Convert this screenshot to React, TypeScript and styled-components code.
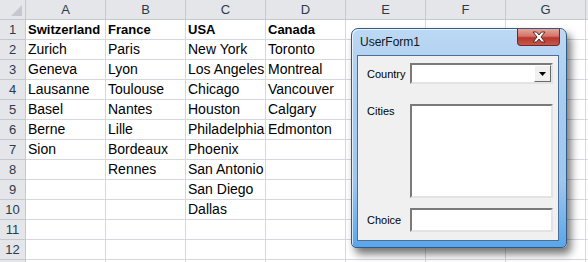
import styled, { createGlobalStyle } from 'styled-components';

const columns = ['A', 'B', 'C', 'D', 'E', 'F', 'G', ''];

const data = [
    ['Switzerland', 'France', 'USA', 'Canada'],
    ['Zurich', 'Paris', 'New York', 'Toronto'],
    ['Geneva', 'Lyon', 'Los Angeles', 'Montreal'],
    ['Lausanne', 'Toulouse', 'Chicago', 'Vancouver'],
    ['Basel', 'Nantes', 'Houston', 'Calgary'],
    ['Berne', 'Lille', 'Philadelphia', 'Edmonton'],
    ['Sion', 'Bordeaux', 'Phoenix', ''],
    ['', 'Rennes', 'San Antonio', ''],
    ['', '', 'San Diego', ''],
    ['', '', 'Dallas', ''],
    ['', '', '', ''],
    ['', '', '', ''],
];

export default function App() {
    return (
        <>
            <GlobalStyle />
            <Page>
                <Sheet>
                    <Corner />
                    {columns.map((col, i) => (
                        <ColHeader key={'h' + i}>{col}</ColHeader>
                    ))}
                    {data.map((row, r) => (
                        <Row key={r} index={r} row={row} />
                    ))}
                    <RowHeader />
                    {columns.map((_, c) => (
                        <Cell key={'last' + c} />
                    ))}
                </Sheet>
                <Window>
                    <TitleBar>
                        <Title>UserForm1</Title>
                        <CloseButton>
                            <svg width="16" height="12" viewBox="0 0 16 12">
                                <path
                                    d="M2 1 L5.5 1 L8 4 L10.5 1 L14 1 L10 6 L14 11 L10.5 11 L8 8 L5.5 11 L2 11 L6 6 Z"
                                    fill="#ffffff"
                                    stroke="#5a2a26"
                                    strokeWidth="1"
                                    strokeLinejoin="round"
                                />
                            </svg>
                        </CloseButton>
                    </TitleBar>
                    <Client>
                        <FormRow height={21}>
                            <Label>Country</Label>
                            <Combo>
                                <DropButton>
                                    <svg width="7" height="4" viewBox="0 0 7 4">
                                        <path d="M0 0 L7 0 L3.5 4 Z" fill="#000" />
                                    </svg>
                                </DropButton>
                            </Combo>
                        </FormRow>
                        <FormRow height={94} space={20} top>
                            <Label top>Cities</Label>
                            <Sunken />
                        </FormRow>
                        <FormRow height={24} space={10}>
                            <Label>Choice</Label>
                            <Sunken />
                        </FormRow>
                    </Client>
                </Window>
            </Page>
        </>
    );
}

function Row({ index, row }) {
    return (
        <>
            <RowHeader>{index + 1}</RowHeader>
            {columns.map((_, c) => (
                <Cell key={c} bold={index === 0}>{row[c] || ''}</Cell>
            ))}
        </>
    );
}

const GlobalStyle = createGlobalStyle`
    body {
        margin: 0;
        background: #ffffff;
        font-family: "Liberation Sans", Arial, sans-serif;
    }
`;

const Page = styled.div`
    position: relative;
    width: 588px;
    height: 262px;
    overflow: hidden;
`;

const Sheet = styled.div`
    display: grid;
    grid-template-columns: 26px repeat(7, 80px) 40px;
    grid-auto-rows: 20px;
`;

const Corner = styled.div`
    position: relative;
    background: #e4e6ea;
    border-right: 1px solid #c5c9cf;
    border-bottom: 1px solid #c5c9cf;
    &::after {
        content: '';
        position: absolute;
        right: 3px;
        bottom: 3px;
        border-left: 11px solid transparent;
        border-bottom: 11px solid #c4c7cc;
    }
`;

const ColHeader = styled.div`
    display: flex;
    align-items: center;
    justify-content: center;
    background: #e4e6ea;
    border-right: 1px solid #c5c9cf;
    border-bottom: 1px solid #c5c9cf;
    font-size: 13px;
    color: #2b3a4c;
`;

const RowHeader = styled.div`
    display: flex;
    align-items: center;
    justify-content: center;
    background: #e4e6ea;
    border-right: 1px solid #c5c9cf;
    border-bottom: 1px solid #c5c9cf;
    font-size: 13px;
    color: #2b3a4c;
`;

const Cell = styled.div<{ bold?: boolean }>`
    display: flex;
    align-items: flex-end;
    padding: 0 0 2px 2px;
    border-right: 1px solid #d5d8dd;
    border-bottom: 1px solid #d5d8dd;
    font-size: ${p => (p.bold ? '13px' : '14px')};
    font-weight: ${p => (p.bold ? 700 : 400)};
    color: #000;
    white-space: nowrap;
`;

const Window = styled.div`
    position: absolute;
    left: 351px;
    top: 28px;
    width: 216px;
    height: 220px;
    box-sizing: border-box;
    display: flex;
    flex-direction: column;
    padding: 0 7px 6px 5px;
    border: 1px solid #34597f;
    border-radius: 7px 7px 5px 5px;
    background: linear-gradient(180deg, #bcd8f4 0%, #a9cdf0 30%, #9ec6ee 70%, #5aa6ea 100%);
    box-shadow: 4px 6px 9px rgba(0, 0, 0, 0.55), inset 1px 1px 0 rgba(255, 255, 255, 0.7);
`;

const TitleBar = styled.div`
    height: 26px;
    display: flex;
    align-items: flex-start;
    justify-content: space-between;
`;

const Title = styled.div`
    padding: 6px 0 0 3px;
    font-size: 12px;
    color: #101820;
`;

const CloseButton = styled.div`
    width: 43px;
    height: 17px;
    margin-right: -1px;
    display: flex;
    align-items: center;
    justify-content: center;
    box-sizing: border-box;
    border: 1px solid #6b2a27;
    border-top: none;
    border-radius: 0 0 4px 4px;
    background: linear-gradient(180deg, #e8a596 0%, #d3736a 45%, #b7372c 55%, #c8574a 100%);
`;

const Client = styled.div`
    flex: 1;
    display: flex;
    flex-direction: column;
    padding: 7px 0 0 9px;
    box-sizing: border-box;
    background: #f0f0f0;
    border: 1px solid #4e6f94;
`;

const FormRow = styled.div<{ height: number; space?: number; top?: boolean }>`
    display: grid;
    grid-template-columns: 43px 143px;
    height: ${p => p.height}px;
    margin-top: ${p => p.space || 0}px;
    align-items: ${p => (p.top ? 'start' : 'center')};
`;

const Label = styled.div<{ top?: boolean }>`
    padding-top: ${p => (p.top ? '1px' : '0')};
    font-size: 11px;
    color: #000;
`;

const Sunken = styled.div`
    box-sizing: border-box;
    height: 100%;
    background: #fff;
    border-style: solid;
    border-width: 2px;
    border-color: #7a7a7a #e3e3e3 #e3e3e3 #7a7a7a;
`;

const Combo = styled(Sunken)`
    display: flex;
    justify-content: flex-end;
`;

const DropButton = styled.div`
    width: 17px;
    height: 17px;
    box-sizing: border-box;
    display: flex;
    align-items: center;
    justify-content: center;
    background: #f0f0f0;
    border-style: solid;
    border-width: 1px;
    border-color: #fff #6a6a6a #6a6a6a #fff;
`;
